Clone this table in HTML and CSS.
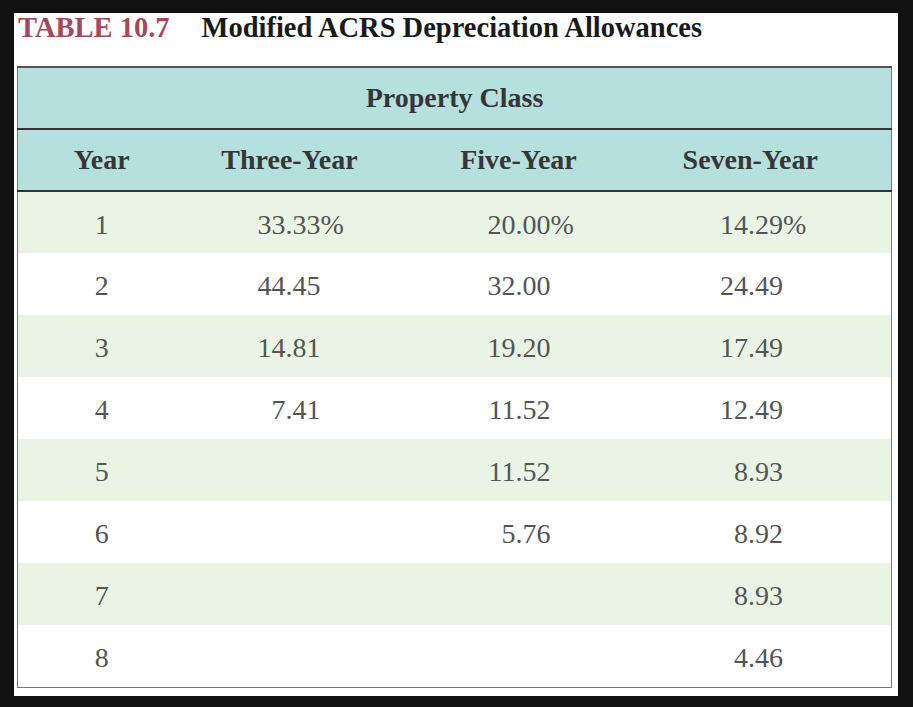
FILE: index.html
```html
<!DOCTYPE html>
<html>
<head>
<meta charset="utf-8">
<link rel="stylesheet" href="styles.css">
</head>
<body>
<div class="panel">
  <h1 class="title"><span class="label">TABLE 10.7</span><span class="caption">Modified ACRS Depreciation Allowances</span></h1>
  <table class="acrs">
    <colgroup>
      <col class="c1"><col class="c2"><col class="c3"><col class="c4">
    </colgroup>
    <thead>
      <tr class="group"><th colspan="4">Property Class</th></tr>
      <tr class="cols"><th>Year</th><th>Three-Year</th><th>Five-Year</th><th class="last">Seven-Year</th></tr>
    </thead>
    <tbody>
      <tr class="odd"><td class="yr">1</td><td class="v2">33.33<span class="pct">%</span></td><td class="v3">20.00<span class="pct">%</span></td><td class="v4">14.29<span class="pct">%</span></td></tr>
      <tr><td class="yr">2</td><td class="v2">44.45</td><td class="v3">32.00</td><td class="v4">24.49</td></tr>
      <tr class="odd"><td class="yr">3</td><td class="v2">14.81</td><td class="v3">19.20</td><td class="v4">17.49</td></tr>
      <tr><td class="yr">4</td><td class="v2">7.41</td><td class="v3">11.52</td><td class="v4">12.49</td></tr>
      <tr class="odd"><td class="yr">5</td><td class="v2"></td><td class="v3">11.52</td><td class="v4">8.93</td></tr>
      <tr><td class="yr">6</td><td class="v2"></td><td class="v3">5.76</td><td class="v4">8.92</td></tr>
      <tr class="odd"><td class="yr">7</td><td class="v2"></td><td class="v3"></td><td class="v4">8.93</td></tr>
      <tr><td class="yr">8</td><td class="v2"></td><td class="v3"></td><td class="v4">4.46</td></tr>
    </tbody>
  </table>
</div>
</body>
</html>
```

FILE: styles.css
```css
html, body {
  margin: 0;
  padding: 0;
  background: #111111;
}

.panel {
  background: #ffffff;
  margin: 13px 15px 0 14px;
  width: 884px;
  height: 683px;
  box-sizing: border-box;
  padding: 0 7px 0 3px;
  font-family: "Liberation Serif", "Times New Roman", serif;
}

.title {
  margin: 0 0 23px 1px;
  font-size: 28.5px;
  line-height: 30px;
  font-weight: bold;
  white-space: nowrap;
}

.label {
  color: #a4495d;
  margin-right: 32px;
}

.caption {
  color: #1a1a1a;
}

.acrs {
  width: 874px;
  table-layout: fixed;
  border-collapse: collapse;
  border: 1px solid #777;
}

.c1 { width: 168px; }
.c2 { width: 208px; }
.c3 { width: 250px; }
.c4 { width: 248px; }

.acrs th {
  background: #b6e0dd;
  color: #363636;
  font-size: 28px;
  font-weight: bold;
  text-align: center;
  padding: 0;
}

.group th {
  height: 60px;
  border-top: 2px solid #555;
  border-bottom: 2px solid #333;
}

.cols th {
  height: 60px;
  border-bottom: 2px solid #333;
}

.cols th.last {
  padding-right: 34px;
}

.acrs td {
  height: 62px;
  padding: 4px 0 0 0;
  box-sizing: border-box;
  font-size: 28px;
  color: #555555;
  vertical-align: middle;
}

.acrs tbody tr.odd td {
  background: #e9f4e4;
}

.yr { text-align: center; }

.v2 { text-align: right; padding-right: 73px !important; }
.v3 { text-align: right; padding-right: 93px !important; }
.v4 { text-align: right; padding-right: 108px !important; }

.pct {
  display: inline-block;
  width: 0;
  white-space: nowrap;
}
```
